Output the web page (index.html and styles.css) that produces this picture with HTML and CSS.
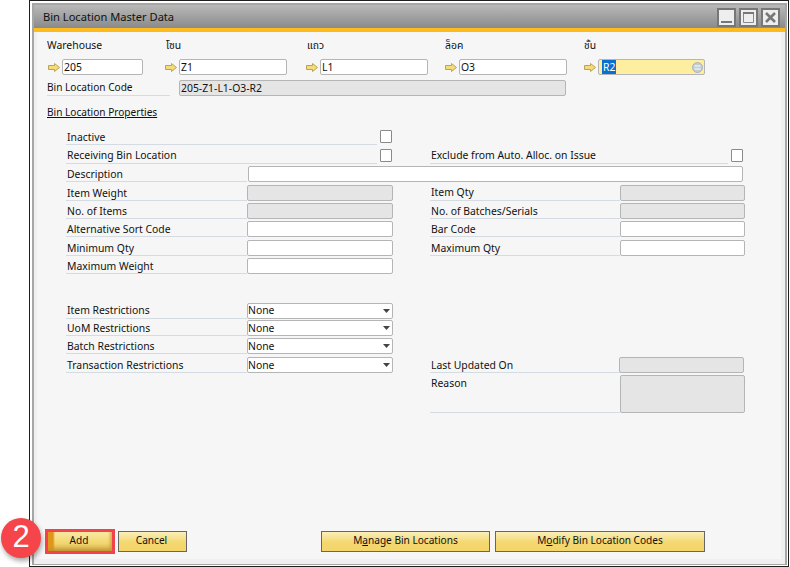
FILE: index.html
```html
<!DOCTYPE html>
<html lang="en">
<head>
<meta charset="utf-8">
<title>Bin Location Master Data</title>
<link rel="stylesheet" href="styles.css">
</head>
<body>
<svg class="defs" width="0" height="0" aria-hidden="true">
  <symbol id="arrow" viewBox="0 0 12 9"><path d="M.5 2.5H6.5V.5L11.5 4.5 6.5 8.5V6.5H.5Z" fill="#f6dc78" stroke="#b8a456"/></symbol>
  <symbol id="caret" viewBox="0 0 7 5"><path d="M0 0H7L3.5 4Z" fill="#444"/></symbol>
</svg>
<div class="window">
  <div class="frame">
    <header class="title">
      <span class="title-text">Bin Location Master Data</span>
      <div class="controls">
        <span class="ctl"><svg viewBox="0 0 15 15" width="15" height="15"><rect x="2" y="11" width="11" height="2" fill="#777"/></svg></span>
        <span class="ctl"><svg viewBox="0 0 15 15" width="15" height="15"><path d="M2.5 3.5H12.5V12.5H2.5Z" fill="none" stroke="#888"/><rect x="2" y="2" width="11" height="2" fill="#777"/></svg></span>
        <span class="ctl"><svg viewBox="0 0 15 15" width="15" height="15"><path d="M3 3L12 12M12 3L3 12" stroke="#777" stroke-width="2.6"/></svg></span>
      </div>
    </header>
    <div class="accent"></div>
    <main class="body">
      <section class="keys">
        <div class="key k1">
          <span class="lbl">Warehouse</span>
          <div class="key-row"><svg class="arr"><use href="#arrow"/></svg><span class="field f1">205</span></div>
        </div>
        <div class="key k2">
          <span class="lbl">โซน</span>
          <div class="key-row"><svg class="arr"><use href="#arrow"/></svg><span class="field f2">Z1</span></div>
        </div>
        <div class="key k3">
          <span class="lbl">แถว</span>
          <div class="key-row"><svg class="arr"><use href="#arrow"/></svg><span class="field f2">L1</span></div>
        </div>
        <div class="key k4">
          <span class="lbl">ล็อค</span>
          <div class="key-row"><svg class="arr"><use href="#arrow"/></svg><span class="field f2">O3</span></div>
        </div>
        <div class="key k5">
          <span class="lbl">ชั้น</span>
          <div class="key-row"><svg class="arr"><use href="#arrow"/></svg>
            <span class="field f5 active"><span class="sel">R2</span>
              <svg class="pick" viewBox="0 0 11 11" width="11" height="11"><circle cx="5.5" cy="5.5" r="5" fill="#c3ccd6" stroke="#a9b3bd"/><path d="M2.5 4H8.5M2.5 7H8.5" stroke="#fff" stroke-width="1.2"/></svg>
            </span>
          </div>
        </div>
      </section>
      <div class="code-row">
        <span class="code-lbl">Bin Location Code</span>
        <span class="field off code">205-Z1-L1-O3-R2</span>
      </div>
      <div class="section-link">Bin Location Properties</div>

      <section class="props">
        <div class="row-a check-cell"><span class="line grow">Inactive</span><span class="cb"></span></div>

        <div class="row-b check-cell"><span class="line grow">Receiving Bin Location</span><span class="cb"></span></div>
        <div class="row-b-r check-cell"><span class="line grow">Exclude from Auto. Alloc. on Issue</span><span class="cb"></span></div>

        <span class="line l-c">Description</span>
        <span class="field desc">&nbsp;</span>

        <span class="line l-d">Item Weight</span><span class="field off c2 r-d"></span>
        <span class="line c4 r-d">Item Qty</span><span class="field off c5 r-d"></span>

        <span class="line l-e">No. of Items</span><span class="field off c2 r-e"></span>
        <span class="line c4 r-e">No. of Batches/Serials</span><span class="field off c5 r-e"></span>

        <span class="line l-f">Alternative Sort Code</span><span class="field c2 r-f"></span>
        <span class="line c4 r-f">Bar Code</span><span class="field c5 r-f"></span>

        <span class="line l-g">Minimum Qty</span><span class="field c2 r-g"></span>
        <span class="line c4 r-g">Maximum Qty</span><span class="field c5 r-g"></span>

        <span class="line l-h">Maximum Weight</span><span class="field c2 r-h"></span>

        <span class="line l-j">Item Restrictions</span>
        <span class="field drop c2 r-j">None<svg class="caret"><use href="#caret"/></svg></span>

        <span class="line l-k">UoM Restrictions</span>
        <span class="field drop c2 r-k">None<svg class="caret"><use href="#caret"/></svg></span>

        <span class="line l-l">Batch Restrictions</span>
        <span class="field drop c2 r-l">None<svg class="caret"><use href="#caret"/></svg></span>

        <span class="line l-m">Transaction Restrictions</span>
        <span class="field drop c2 r-m">None<svg class="caret"><use href="#caret"/></svg></span>
        <span class="line c4 r-m">Last Updated On</span><span class="field off updated r-m"></span>

        <span class="line c4 r-n reason-lbl">Reason</span><span class="field off c5 r-n reason"></span>
      </section>

      <footer class="actions">
        <button class="btn add" type="button"><span>Add</span></button>
        <button class="btn cancel" type="button"><span>Cancel</span></button>
        <button class="btn manage" type="button"><span>M<u>a</u>nage Bin Locations</span></button>
        <button class="btn modify" type="button"><span>M<u>o</u>dify Bin Location Codes</span></button>
      </footer>
    </main>
  </div>
</div>
<div class="badge">2</div>
</body>
</html>
```
FILE: styles.css
```css
* { box-sizing: border-box; }
html, body { margin: 0; padding: 0; background: #fff; }
body {
  position: relative;
  width: 790px;
  height: 567px;
  overflow: hidden;
  font: 10.4px/15px "Noto Sans", "Noto Sans Thai", "DejaVu Sans", sans-serif;
  color: #111;
}
.defs { position: absolute; }
.window {
  margin-left: 29px;
  width: 760px;
  height: 567px;
  border: 1px solid #1e1e1e;
  padding: 2px 1px 1px 2px;
  background: #fff;
}
.frame {
  height: 100%;
  border: 2px solid #a6a6a6;
  border-bottom-width: 1px;
  display: flex;
  flex-direction: column;
}
.title {
  height: 23px;
  flex: none;
  display: flex;
  align-items: center;
  justify-content: space-between;
  padding: 0 5px 0 9px;
  background: linear-gradient(#b9b9b9, #8a8a8a);
  font-size: 11.1px;
}
.title-text { color: #111; }
.controls { display: flex; gap: 3px; margin-top: 1px; }
.ctl {
  width: 19px;
  height: 19px;
  background: #eeeeee;
  border: 2px solid #777;
  display: flex;
}
.accent { height: 4px; flex: none; background: #fdbb1d; }
.body {
  flex: 1;
  display: flex;
  flex-direction: column;
  background: #f6f6f6;
  border: solid #efefef;
  border-width: 0 4px 5px 3px;
  padding: 5px 0 0 10px;
}
.keys {
  display: grid;
  grid-template-columns: 118px 141px 139px 139px 121px;
}
.key { display: flex; flex-direction: column; }
.lbl { height: 16px; line-height: 15px; padding: 1px 0 0 1px; }
.k1 .lbl { padding-left: 0; }
.k4 .lbl, .k5 .lbl { padding-left: 0; }
.key-row { display: flex; align-items: center; margin-top: 6px; }
.arr { width: 12px; height: 9px; margin-right: 2px; flex: none; }
.k1 .arr { margin-left: 1px; }
.field {
  display: block;
  height: 16px;
  line-height: 14px;
  background: #fff;
  border: 1px solid #b5b5b5;
  border-radius: 2px;
  padding: 0 1px;
  white-space: nowrap;
}
.off { background: #e5e5e5; }
.f1 { width: 81px; }
.f2 { width: 108px; }
.f5 { width: 107px; }
.active {
  display: flex;
  align-items: center;
  justify-content: space-between;
  background: #fdeea0;
  padding-left: 3px;
}
.sel { background: #0a6fd0; color: #fff; padding: 0 1px; }
.code-row { display: flex; align-items: flex-start; margin-top: 5px; height: 16px; }
.code-lbl {
  width: 123px;
  margin-right: 9px;
  border-bottom: 1px solid #d5dbe2;
  height: 16px;
  line-height: 14px;
  font-size: 10.1px;
}
.code { width: 387px; }
.section-link {
  margin-top: 9px;
  line-height: 15px;
  font-size: 10.1px;
  text-decoration: underline;
}
.props {
  display: grid;
  margin: 8px 0 0 19px;
  width: 679px;
  grid-template-columns: 181px 146px 37px 190px 125px;
  grid-template-rows: 17px 19px 18px 19px 18px 18px 19px 18px 27px 18px 17px 18px 19px 40px;
}
.line {
  display: block;
  border-bottom: 1px solid #d5dbe2;
  height: 17px;
  line-height: 15px;
  padding: 2px 0 0 1px;
  align-self: end;
  white-space: nowrap;
}
.props .l-j, .props .c4.r-d, .row-b .line, .row-b-r .line { padding-top: 1px; }
.props .field { align-self: end; }
.check-cell { display: flex; align-items: flex-end; }
.grow { flex: 1; }
.cb {
  width: 12px;
  height: 13px;
  margin: 0 1px 2px 3px;
  background: #fff;
  border: 1px solid #8a8a8a;
  border-radius: 1px;
  flex: none;
}
.row-a { grid-column: 1 / 4; grid-row: 1; margin-right: 37px; }
.row-b { grid-column: 1 / 3; grid-row: 2; }
.row-b-r { grid-column: 4 / 6; grid-row: 2; }
.row-b-r .cb { margin-right: 2px; }
.l-c { grid-column: 1; grid-row: 3; }
.desc { grid-column: 2 / 6; grid-row: 3; margin: 0 2px 0 1px; }
.l-d { grid-column: 1; grid-row: 4; }
.l-e { grid-column: 1; grid-row: 5; }
.l-f { grid-column: 1; grid-row: 6; }
.l-g { grid-column: 1; grid-row: 7; }
.l-h { grid-column: 1; grid-row: 8; }
.l-j { grid-column: 1; grid-row: 10; }
.l-k { grid-column: 1; grid-row: 11; }
.l-l { grid-column: 1; grid-row: 12; }
.l-m { grid-column: 1; grid-row: 13; }
.c2 { grid-column: 2; }
.c4 { grid-column: 4; }
.c5 { grid-column: 5; }
.r-d { grid-row: 4; }
.r-e { grid-row: 5; }
.r-f { grid-row: 6; }
.r-g { grid-row: 7; }
.r-h { grid-row: 8; }
.r-j { grid-row: 10; }
.r-k { grid-row: 11; }
.r-l { grid-row: 12; }
.r-m { grid-row: 13; }
.r-n { grid-row: 14; }
.updated { grid-column: 5; margin: 0 1px 0 -1px; }
.reason-lbl { height: 39px; align-self: end; }
.props .reason { height: 38px; }
.drop { position: relative; padding-left: 0; }
.drop.r-j { line-height: 13px; }
.caret {
  position: absolute;
  right: 2px;
  top: 5px;
  width: 7px;
  height: 5px;
}
.actions {
  margin-top: auto;
  display: flex;
  align-items: center;
  padding-bottom: 7px;
}
.btn {
  font: inherit;
  font-size: 10.1px;
  color: #111;
  height: 21px;
  padding: 0 0 3px;
  line-height: 15px;
  border: 1px solid #666;
  background: linear-gradient(#fbefb9, #f3d76f 55%, #f3d56b);
  cursor: default;
}
.add {
  width: 64px;
  height: 19px;
  margin-left: 1px;
  padding-right: 2px;
  border: 0;
  box-shadow: 0 0 0 3px #f2434a, inset -2px -2px 3px rgba(190,140,40,.6);
  background:
    linear-gradient(90deg, #e0961c 0, #e0961c 5px, rgba(224,150,28,0) 7px),
    linear-gradient(#f9e9a4, #f2d56c 60%, #cfa94a);
}
.cancel { width: 69px; margin-left: 6px; padding-right: 2px; }
.manage { width: 169px; margin-left: 134px; }
.modify { width: 210px; margin-left: 5px; }
.badge {
  position: absolute;
  left: 1px;
  top: 518px;
  width: 40px;
  height: 40px;
  border-radius: 50%;
  background: #f5444a;
  color: #fff;
  font: 31px/37px "Liberation Sans", sans-serif;
  text-align: center;
  box-shadow: 1px 3px 5px rgba(0,0,0,.35);
}
```
